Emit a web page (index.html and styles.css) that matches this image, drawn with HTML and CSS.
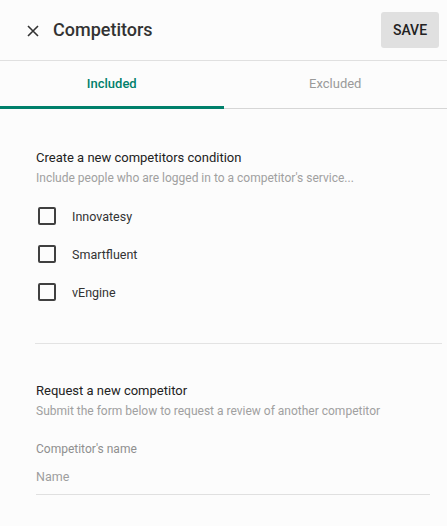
FILE: index.html
```html
<!DOCTYPE html>
<html>
<head>
<meta charset="utf-8">
<link rel="stylesheet" href="styles.css">
</head>
<body>
<div class="dialog">
  <header class="topbar">
    <button class="close" aria-label="Close">
      <svg width="12" height="12" viewBox="0 0 12 12"><path d="M1 1L11 11M11 1L1 11" stroke="#333" stroke-width="1.6" fill="none"/></svg>
    </button>
    <h1 class="title">Competitors</h1>
    <button class="save">SAVE</button>
  </header>
  <nav class="tabs">
    <div class="tab active">Included</div>
    <div class="tab">Excluded</div>
  </nav>
  <section class="section first">
    <h2 class="sec-title">Create a new competitors condition</h2>
    <p class="sec-sub">Include people who are logged in to a competitor's service...</p>
    <ul class="checks">
      <li class="check"><span class="box"></span><span class="label">Innovatesy</span></li>
      <li class="check"><span class="box"></span><span class="label">Smartfluent</span></li>
      <li class="check"><span class="box"></span><span class="label">vEngine</span></li>
    </ul>
  </section>
  <hr class="divider">
  <section class="section second">
    <h2 class="sec-title">Request a new competitor</h2>
    <p class="sec-sub">Submit the form below to request a review of another competitor</p>
    <div class="field">
      <div class="field-label">Competitor's name</div>
      <div class="field-input">Name</div>
    </div>
  </section>
</div>
</body>
</html>
```
FILE: styles.css
```css
* { box-sizing: border-box; }
html, body { margin: 0; padding: 0; }
body {
  background: #fcfcfc;
  font-family: Roboto, "Liberation Sans", sans-serif;
  color: #333;
  width: 447px;
  height: 526px;
  overflow: hidden;
}
.topbar {
  height: 61px;
  display: flex;
  align-items: center;
  border-bottom: 1px solid #e0e0e0;
  padding: 0 8px 0 26px;
}
.close {
  border: 0;
  background: none;
  padding: 0;
  width: 14px;
  height: 14px;
  display: flex;
  align-items: center;
  justify-content: center;
  margin-top: 2px;
}
.title {
  margin: -1px 0 0 13px;
  font-size: 18px;
  font-weight: 500;
  color: #333;
  flex: 1;
}
.save {
  border: 0;
  background: #e0e0e0;
  border-radius: 3px;
  width: 58px;
  height: 36px;
  font-family: Roboto, sans-serif;
  font-size: 14px;
  font-weight: 500;
  color: #222;
  margin-top: -1px;
}
.tabs {
  display: flex;
  height: 48px;
  border-bottom: 1px solid #d6d6d6;
}
.tab {
  flex: 1;
  display: flex;
  align-items: center;
  justify-content: center;
  font-size: 13px;
  color: #9a9a9a;
  padding-bottom: 2px;
}
.tab.active {
  color: #00806b;
  font-weight: 500;
  border-bottom: 3px solid #00806b;
  margin-bottom: -1px;
  padding-bottom: 0;
}
.section { padding: 0 0 0 36px; }
.section.first { padding-top: 40px; }
.sec-title {
  margin: 0;
  font-size: 13px;
  font-weight: 400;
  line-height: 18px;
  color: #222;
}
.sec-sub {
  margin: 2px 0 0;
  font-size: 12px;
  line-height: 18px;
  color: #a0a0a0;
}
.checks {
  list-style: none;
  margin: 10px 0 0;
  padding: 0 0 0 2px;
}
.check {
  display: flex;
  align-items: center;
  height: 38px;
}
.box {
  width: 18px;
  height: 18px;
  border: 2px solid #404040;
  border-radius: 2px;
}
.label {
  margin-left: 16px;
  font-size: 12.5px;
  color: #333;
}
.divider {
  margin: 32px 5px 0 35px;
  border: 0;
  border-top: 1px solid #e3e3e3;
}
.section.second { padding-top: 38px; }
.field { margin-top: 20px; width: 394px; }
.field-label {
  font-size: 12px;
  line-height: 18px;
  color: #8f8f8f;
}
.field-input {
  margin-top: 10px;
  font-size: 12.5px;
  line-height: 18px;
  color: #9e9e9e;
  padding-bottom: 8px;
  border-bottom: 1px solid #e0e0e0;
}
```
